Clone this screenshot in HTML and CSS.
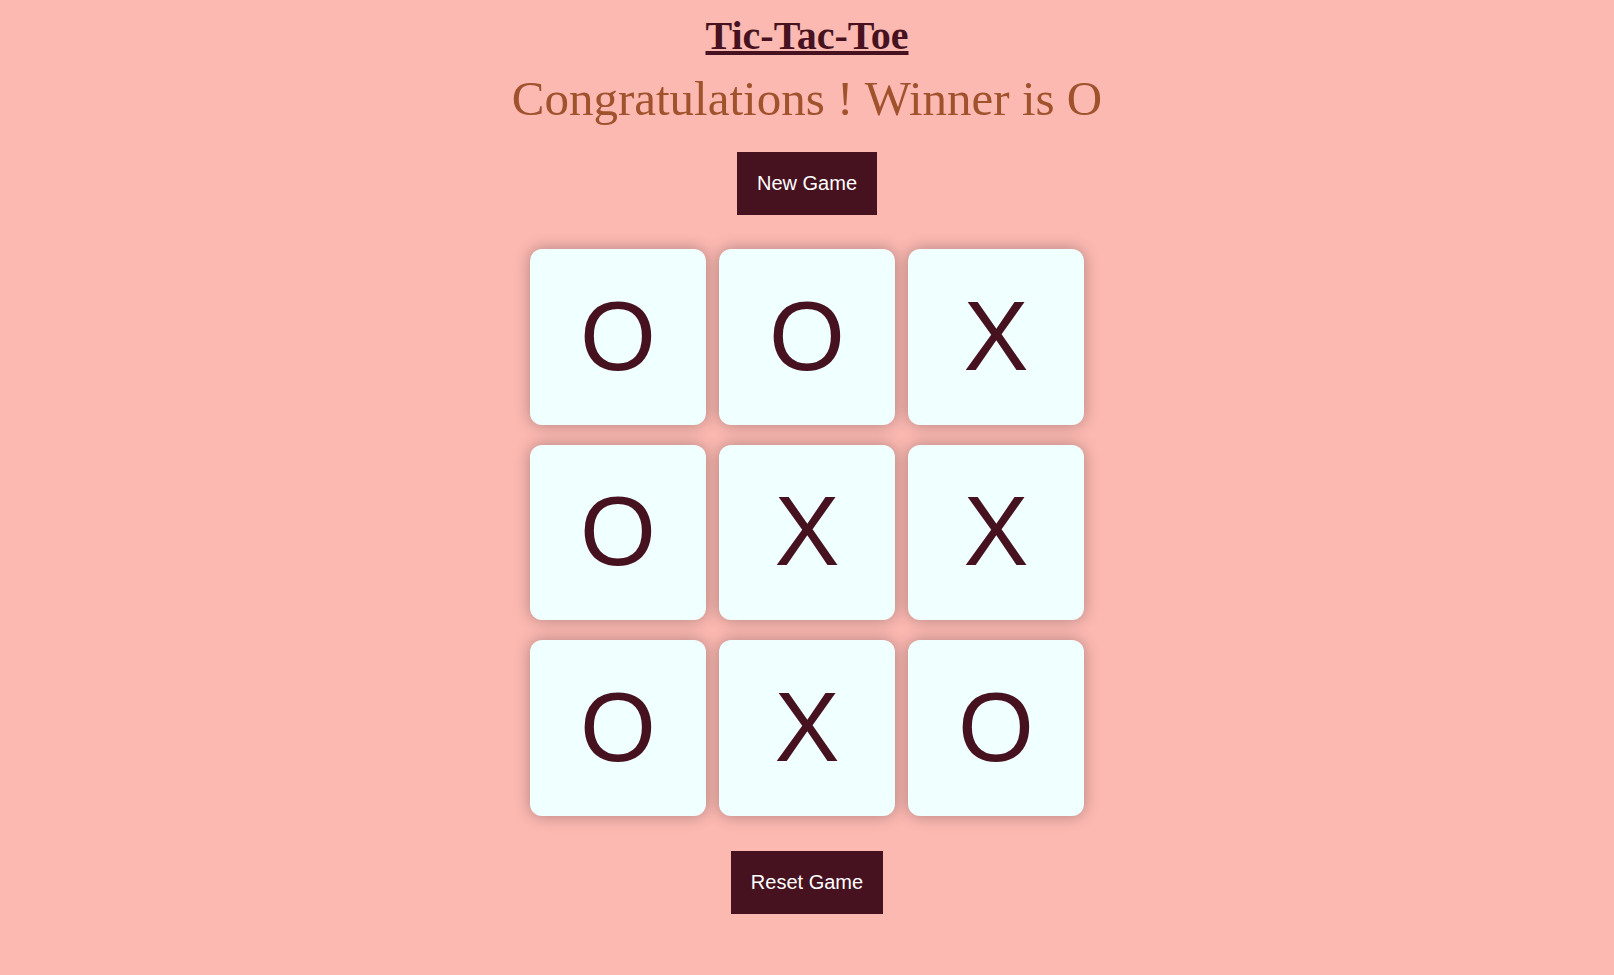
FILE: index.html
```html
<!DOCTYPE html>
<html lang="en">
<head>
<meta charset="UTF-8">
<title>Tic-Tac-Toe</title>
<link rel="stylesheet" href="styles.css">
</head>
<body>
<main class="game">
  <h1 class="title">Tic-Tac-Toe</h1>
  <p class="message">Congratulations ! Winner is O</p>
  <button class="btn btn-new">New Game</button>
  <div class="board">
    <button class="box">O</button>
    <button class="box">O</button>
    <button class="box">X</button>
    <button class="box">O</button>
    <button class="box">X</button>
    <button class="box">X</button>
    <button class="box">O</button>
    <button class="box">X</button>
    <button class="box">O</button>
  </div>
  <button class="btn btn-reset">Reset Game</button>
</main>
</body>
</html>
```
FILE: styles.css
```css
* {
  box-sizing: border-box;
}

html, body {
  margin: 0;
  padding: 0;
}

body {
  background-color: #fcb9b2;
  font-family: "Liberation Serif", "Times New Roman", serif;
  min-height: 100vh;
}

.game {
  display: flex;
  flex-direction: column;
  align-items: center;
}

.title {
  margin: 13px 0 0;
  font-size: 40px;
  font-weight: bold;
  color: #461220;
  text-decoration: underline;
  line-height: 46px;
}

.message {
  margin: 12px 0 0;
  font-size: 49px;
  color: #a0522d;
  line-height: 56px;
}

.btn {
  border: none;
  background-color: #461220;
  color: #ffffff;
  font-family: "Liberation Sans", Arial, sans-serif;
  font-size: 20px;
  line-height: 23px;
  padding: 20px;
  cursor: pointer;
}

.btn-new {
  margin-top: 25px;
}

.board {
  margin-top: 34px;
  display: grid;
  grid-template-columns: repeat(3, 18vmin);
  grid-auto-rows: 18vmin;
  column-gap: 13.5px;
  row-gap: 20px;
}

.box {
  border: none;
  border-radius: 12px;
  background-color: #f0ffff;
  box-shadow: 0 0 16px rgba(0, 0, 0, 0.3);
  color: #461220;
  font-family: "Liberation Sans", Arial, sans-serif;
  font-size: 10vmin;
  display: flex;
  align-items: center;
  justify-content: center;
  padding: 0;
}

.btn-reset {
  margin-top: 35px;
}
```
